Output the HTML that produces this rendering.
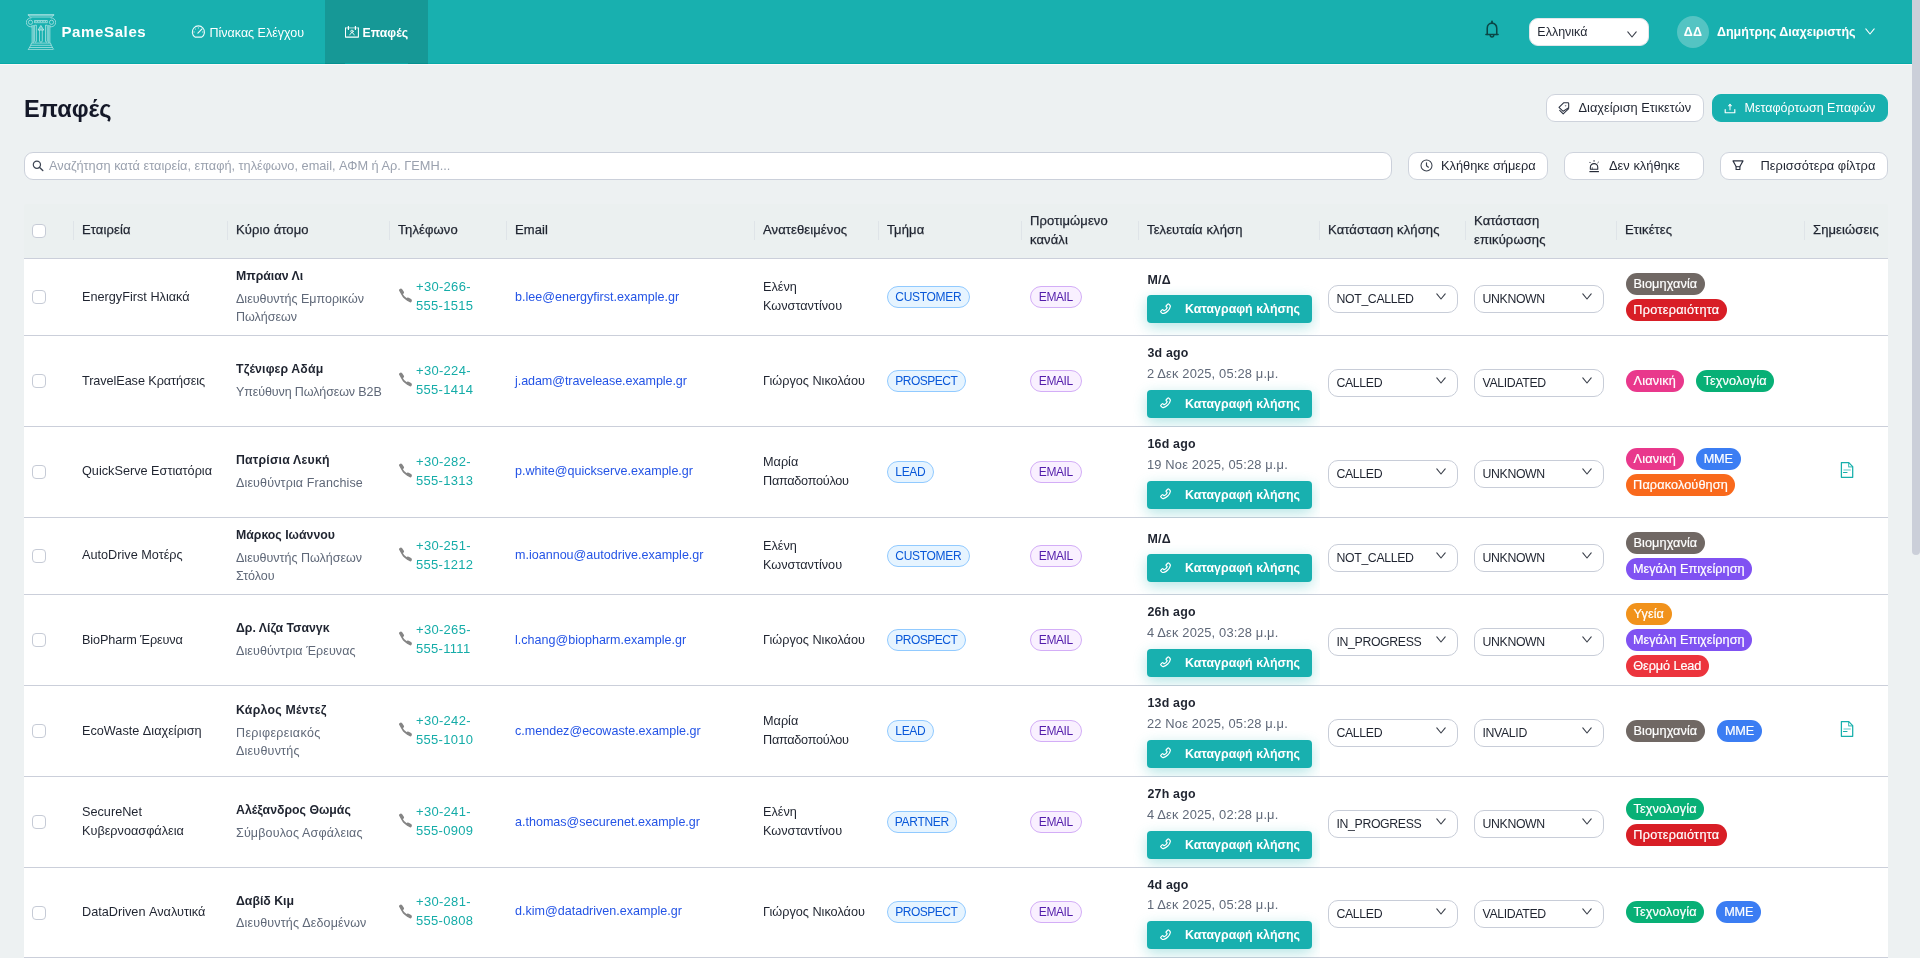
<!DOCTYPE html>
<html lang="el"><head><meta charset="utf-8"><title>PameSales</title>
<style>
*{box-sizing:border-box;margin:0;padding:0}
html,body{width:1920px;height:958px;overflow:hidden}
body{font-family:"Liberation Sans",sans-serif;background:#edf1f2;color:#1f2430;font-size:13px;position:relative}
svg{display:block}
#root{position:absolute;left:0;top:0;width:1920px;height:958px;will-change:transform}
.nav{position:absolute;left:0;top:0;width:1920px;height:64px;background:#18b0af;z-index:2}
.nav .abs{position:absolute}
.brand{position:absolute;left:61.500px;top:20.800px;font-size:15px;letter-spacing:.62px;font-weight:700;color:#fff;line-height:22px;white-space:nowrap}
.tab-active{position:absolute;left:325px;top:0;width:103px;height:64px;background:#169896;border-bottom:1px solid #049090}
.navb{position:absolute;left:0;top:63px;width:1920px;height:1px;background:#07aaa8}
.navw{position:absolute;left:0;top:64px;width:1912px;height:1px;background:#fcf8f8}
.tab-line{position:absolute;left:345px;top:63px;width:63px;height:1px;background:#08a8a6}
.navtxt{position:absolute;top:23px;line-height:20px;color:#fff;white-space:nowrap}
.lang{position:absolute;left:1529px;top:18px;width:120px;height:28px;background:#fff;border-radius:9px;border:1px solid #e3e6ea}
.lang span{position:absolute;left:7.300px;top:3px;line-height:20px;font-size:12.5px;color:#1f2430}
.avatar{position:absolute;left:1677px;top:16px;width:32px;height:32px;border-radius:50%;background:#54c4c3;color:#fff;font-weight:700;font-size:12.5px;line-height:33px;text-align:center;letter-spacing:.3px}
.scroll{position:absolute;left:1912px;top:0;width:8px;height:555px;background:#cbcfd9;border-radius:0 0 4px 4px;z-index:3}
h1{position:absolute;left:24px;top:93px;font-size:23.6px;line-height:32px;font-weight:700;color:#141828;letter-spacing:0;white-space:nowrap}
.btn{position:absolute;height:28px;border-radius:9px;background:#fff;border:1px solid #ced3dc;font-size:13px;line-height:26px;color:#1f2430;white-space:nowrap}
.btn.primary{background:#18b0af;border-color:#18b0af;color:#fff}
.btn .t{position:absolute;top:0}
.btn svg{position:absolute}
.search{position:absolute;left:24px;top:152px;width:1368px;height:28px;border-radius:9px;background:#fff;border:1px solid #cbd0da}
.search span{position:absolute;left:24px;top:0;line-height:26px;font-size:12.75px;color:#9aa1ae;white-space:nowrap}
table{position:absolute;left:24px;top:204px;width:1864px;border-collapse:separate;border-spacing:0;table-layout:fixed}
th{background:#ebf0f0;height:55px;border-bottom:1px solid #cbcfda;text-align:left;font-weight:400;font-size:13px;line-height:19.5px;padding:0 8px 2px;position:relative;color:#1f2430;vertical-align:middle;-webkit-text-stroke:.25px #1f2430;letter-spacing:.12px}
th:first-child{border-top-left-radius:2px}
th:last-child{border-top-right-radius:2px}
th:not(:last-child)::after{content:"";position:absolute;right:0;top:17px;width:1px;height:19px;background:#dfe4e8}
td{background:#fff;border-bottom:1px solid #cbcfda;padding:0 8px;vertical-align:middle;font-size:13px;line-height:19.5px;white-space:nowrap;position:relative}
tr.s td{height:77px}
tr.t td{height:91px}
tr.u td{height:90px}
tr.u .sel{top:1px}
tr.u .tags,tr.u .tag{position:relative;top:-1px}
.cb{display:block;width:14px;height:14px;border:1px solid #c6cbd6;border-radius:4px;background:#fff}
.co{font-size:12.7px;color:#1f2430;position:relative}
.co.one{top:1px}
.co.one.up{top:0}
.nm{font-weight:700;font-size:12.3px;color:#1f2430;line-height:19.5px;position:relative;top:-1px}
.ti{font-size:12.5px;color:#5f6878;line-height:18px;margin-top:3px}
.nm.r8{top:-1px}
.ti.r8{margin-top:1px}
.ph{color:#15aca8;font-size:13px;letter-spacing:.3px;line-height:19px;padding-left:18px;position:relative;top:-1.500px}
.ph svg{position:absolute;left:-.5px;top:11.500px}
.em{color:#2454e6;font-size:12.55px;position:relative;top:0}
.em.up{top:-1px}
.as{font-size:12.7px;line-height:19.5px}
.as.one{position:relative;top:1px}
.as.one.up{top:0}
.tag{display:inline-block;height:22px;line-height:20px;border-radius:11px;border:1px solid;padding:0;text-align:center;font-size:12px;letter-spacing:-.3px;text-indent:-.3px}
.tag.b{background:#e6f4ff;border-color:#91caff;color:#0958d9}
.tag.p{background:#f9f0ff;border-color:#d3adf7;color:#531dab}
.lc{display:flex;flex-direction:column}
.lc b{font-size:12.4px;line-height:19.5px;font-weight:700;letter-spacing:.2px;padding-left:.5px}
.lc i{font-style:normal;font-size:12.9px;color:#5f6878;line-height:18px;margin-top:1px;letter-spacing:.15px}
.cbtn{display:block;height:28px;margin-top:7px;border-radius:4px;background:#18b0af;color:#fff;font-weight:700;font-size:12.4px;line-height:28px;position:relative;box-shadow:0 4px 14px rgba(24,176,175,.33)}
tr.s .cbtn{margin-top:5px}
.cbtn svg{position:absolute;left:12.500px;top:7.500px}
.cbtn span{position:absolute;left:38px;top:0}
.sel{display:block;position:relative;top:2px;width:130px;height:28px;border:1px solid #c8cdd8;border-radius:10px;background:#fff;font-size:12.3px;letter-spacing:-.36px;line-height:26.400px;padding-left:7.500px;color:#1f2430}
.sel svg{position:absolute;right:11.500px;top:7px}
.tags{display:flex;flex-wrap:wrap;gap:4px 12px;align-items:flex-start}
.tags.col{flex-direction:column;gap:4px}
.tl{display:flex;gap:12px;height:22px}
.pill{display:inline-block;height:22px;line-height:22px;border-radius:11px;padding:0;text-align:center;font-size:12.7px;color:#fff;flex:none;-webkit-text-stroke:.2px #fff}
.tags{margin-left:.8px}
.note{position:absolute;left:35px;top:50%;margin-top:-10px}
</style></head>
<body><div id="root">
<div class="nav">
<div class="navb"></div><div class="tab-active"></div><div class="tab-line"></div><div class="navw"></div>
<svg style="position:absolute;left:26px;top:14px" width="30" height="36" viewBox="0 0 30 36" >
<g fill="none" stroke="#fff" stroke-opacity=".82" stroke-width=".62" stroke-linejoin="round" stroke-linecap="butt">
<path d="M2.200 .4h25.600v.9H2.200z"/>
<path d="M2.600 1.300c.5 1.100 1.500 1.700 2.900 1.700h19c1.400 0 2.400-.6 2.900-1.700"/>
<path d="M5.500 3.800C2.600 3.800.3 5.800.3 8.300s2 4.500 4.600 4.500h1.200"/>
<path d="M24.500 3.800c2.900 0 5.200 2 5.200 4.500s-2 4.500-4.600 4.500h-1.200"/>
<circle cx="4.500" cy="8.300" r="2.100"/>
<circle cx="25.500" cy="8.300" r="2.100"/>
<path d="M8.500 6.500h12.800v2.200H8.500z"/>
<path d="M9.500 7.500h10.800" stroke-dasharray=".8 .8" stroke-width=".8"/>
<path d="M6.100 11v17.800M7.300 11v17.800M22.700 11v17.800M23.900 11v17.800"/>
<path d="M8.600 11.200h1.800v15.900c0 .6-.4 1-.9 1s-.9-.4-.9-1z"/>
<path d="M19.500 11.200h1.800v15.900c0 .6-.4 1-.9 1s-.9-.4-.9-1z"/>
<path d="M13.500 16.100v11c0 .6.600 1 1.400 1s1.400-.4 1.400-1v-11"/>
<path d="M12 16.100l2.900-4.700 2.900 4.700z" fill="#fff" fill-opacity=".35"/>
<path d="M5.500 29.100h19M4.700 31.300h20.600M3.500 33.500h23M2.200 35.600h24.800"/>
<path d="M5.500 29.100l-.8 2.200-1.200 2.200-1.300 2.100M24.500 29.100l.8 2.200 1.200 2.200 1.300 2.100"/>
</g></svg>
<div class="brand">PameSales</div>
<svg style="position:absolute;left:191.3px;top:25.2px" width="15" height="14" viewBox="0 0 15 14" >
<g fill="none" stroke="#fff" stroke-opacity=".92" stroke-width="1.100" stroke-linecap="round" stroke-linejoin="round">
<path d="M4.050 12.100A6.100 6.100 0 1 1 10.750 12.100z"/>
<path d="M6.900 8.100l4.200-4.300" stroke-width="1.200"/>
<path d="M7.400 2.700v.5M2.700 7h.7M11.400 7h.7M4.100 3.700l.5.500" stroke-width=".9" stroke-opacity=".8"/>
</g></svg><svg style="position:absolute;left:345px;top:26px" width="15" height="13" viewBox="0 0 15 13" >
<g fill="none" stroke="#fff" stroke-width="1.050" stroke-linejoin="round" stroke-linecap="round">
<path d="M.5 1.900V11.100H13.400V1.900" />
<path d="M.5 1.900H13.400" stroke-opacity=".75" stroke-width=".9"/>
<path d="M3.400 .5v3M10.400 .5v3" stroke-width="1.200"/>
<circle cx="7" cy="5.300" r="1.200" stroke-width=".85"/>
<path d="M4.850 8.900c.3-1.400 1.200-2.100 2.150-2.100s1.850.7 2.150 2.100" stroke-width=".85"/>
</g></svg>
<div class="navtxt" style="left:209.500px;font-size:12.5px">Πίνακας Ελέγχου</div>
<div class="navtxt" style="left:362.500px;font-size:12.3px;font-weight:700">Επαφές</div>
<svg style="position:absolute;left:1485px;top:19.6px" width="14" height="18.6" viewBox="0 0 15 19" >
<g fill="none" stroke="#0b4646" stroke-width="1.650" stroke-linecap="round" stroke-linejoin="round">
<path d="M7.500 1.100v1.700" stroke-width="1.900"/>
<path d="M2.400 15V8.300c0-3 2.200-5.400 5.100-5.400s5.100 2.400 5.100 5.400V15"/>
<path d="M1 15.100h13"/>
<path d="M5.600 15.600c0 1.300.8 2.200 1.900 2.200s1.900-.9 1.900-2.200" stroke-width="1.500"/>
</g></svg>
<div class="lang"><span>Ελληνικά</span><div style="position:absolute;left:97px;top:11.500px"><svg class="chev" width="10" height="7" viewBox="0 0 10 7" fill="none" stroke="#3a3f4a" stroke-width="1.1" stroke-linecap="round" stroke-linejoin="round"><path d="M0.8 0.9 L5 6 L9.2 0.9"/></svg></div></div>
<div class="avatar">ΔΔ</div>
<div class="navtxt" style="left:1717px;top:22px;font-size:12.5px;font-weight:700">Δημήτρης Διαχειριστής</div>
<div style="position:absolute;left:1865px;top:28px"><svg class="chev" width="10" height="7" viewBox="0 0 10 7" fill="none" stroke="#fff" stroke-width="1.05" stroke-linecap="round" stroke-linejoin="round"><path d="M0.8 0.9 L5 6 L9.2 0.9"/></svg></div>
</div>
<h1>Επαφές</h1>
<div class="btn" style="left:1546px;top:94px;width:158px"><svg style="position:absolute;left:10.8px;top:7px" width="12" height="13" viewBox="0 0 12 13" >
<g fill="none" stroke="#2a3140" stroke-width="1.050" stroke-linejoin="round" stroke-linecap="round">
<path d="M5.600 .8h4.300c.5 0 .8.300.8.800v4L5.200 9.300 1 5.400z"/>
<circle cx="7.600" cy="3.700" r=".3" fill="#2a3140" stroke-opacity=".6"/>
<path d="M1.700 8.400l3.500 3.500 5.500-5.300"/>
</g></svg><span class="t" style="left:31.500px;font-size:12.8px">Διαχείριση Ετικετών</span></div>
<div class="btn primary" style="left:1712px;top:94px;width:176px"><svg style="position:absolute;left:10.8px;top:8px" width="12" height="11" viewBox="0 0 12 11" >
<g fill="none" stroke="#fff" stroke-width="1.150" stroke-linecap="round" stroke-linejoin="round">
<path d="M1.200 6.500v3.200h9.600V6.500"/>
<path d="M6 1.600v5.100" stroke-opacity=".75" stroke-width="1.300"/>
<path d="M4.500 2.600L6 .9l1.500 1.700z" fill="#fff" stroke-width=".6"/>
</g></svg><span class="t" style="left:31.500px;font-size:12.5px">Μεταφόρτωση Επαφών</span></div>
<div class="search"><svg style="position:absolute;left:7px;top:7px" width="12" height="12" viewBox="0 0 12 12" >
<g fill="none" stroke="#3d4553" stroke-width="1.200" stroke-linecap="round">
<circle cx="4.900" cy="4.700" r="3.600"/>
<path d="M7.600 7.400l3.200 3.200" stroke-width="1.400"/>
</g></svg><span>Αναζήτηση κατά εταιρεία, επαφή, τηλέφωνο, email, ΑΦΜ ή Αρ. ΓΕΜΗ...</span></div>
<div class="btn" style="left:1408px;top:152px;width:140px"><svg style="position:absolute;left:11px;top:6.1px" width="13" height="13" viewBox="0 0 13 13" >
<g fill="none" stroke="#3a414e" stroke-width="1.050" stroke-linecap="round" stroke-linejoin="round">
<circle cx="6.500" cy="6.500" r="5.500"/>
<path d="M6.500 3.700v3l1.900 1.500" stroke-width="1.150"/>
</g></svg><span class="t" style="left:32px;font-size:12.8px">Κλήθηκε σήμερα</span></div>
<div class="btn" style="left:1564px;top:152px;width:140px"><svg style="position:absolute;left:24px;top:7px" width="11" height="13" viewBox="0 0 11 13" >
<g fill="none" stroke="#252b38" stroke-width="1.100" stroke-linecap="round" stroke-linejoin="round">
<path d="M1.350 9.300V7.350a3.700 3.700 0 0 1 7.400 0V9.300z"/>
<path d="M.4 11.600h9.500" stroke-width="1.200" stroke-linecap="butt"/>
<path d="M5.050 .5v.8M.7 2.200l.6.600M9.400 2.200l-.6.600" stroke-width="1"/>
<path d="M3.300 7.600v1.600" stroke-width=".8" stroke-opacity=".8"/>
</g></svg><span class="t" style="left:44px;font-size:12.9px">Δεν κλήθηκε</span></div>
<div class="btn" style="left:1720px;top:152px;width:168px"><svg style="position:absolute;left:10.8px;top:6.6px" width="12" height="11" viewBox="0 0 12 11" >
<g fill="none" stroke="#2a3140" stroke-width="1.150" stroke-linejoin="round" stroke-linecap="round">
<path d="M1 .9h10L7.900 6.500v3H4.100V6.500z"/>
<path d="M4.100 6.700h3.800" stroke-width="1"/>
</g></svg><span class="t" style="left:39.500px;font-size:12.9px">Περισσότερα φίλτρα</span></div>

<table><colgroup><col style="width:50px"><col style="width:154px"><col style="width:162px"><col style="width:117px"><col style="width:248px"><col style="width:124px"><col style="width:143px"><col style="width:117px"><col style="width:181px"><col style="width:146px"><col style="width:151px"><col style="width:188px"><col style="width:83px"></colgroup><thead><tr><th><span class="cb" style="position:relative;top:1px"></span></th><th>Εταιρεία</th><th>Κύριο άτομο</th><th>Τηλέφωνο</th><th>Email</th><th>Ανατεθειμένος</th><th>Τμήμα</th><th>Προτιμώμενο<br>κανάλι</th><th>Τελευταία κλήση</th><th>Κατάσταση κλήσης</th><th>Κατάσταση<br>επικύρωσης</th><th>Ετικέτες</th><th>Σημειώσεις</th></tr></thead><tbody><tr class="s">
<td><span class="cb"></span></td>
<td><div class="co one">EnergyFirst Ηλιακά</div></td>
<td><div class="nm">Μπράιαν Λι</div><div class="ti">Διευθυντής Εμπορικών<br>Πωλήσεων</div></td>
<td><div class="ph"><svg width="15" height="15" viewBox="0 0 15 15"><g fill="none" stroke="#858585" stroke-linecap="round"><path d="M3.100 3.200C3.600 7.200 6.900 11 11.300 12.100" stroke-width="1.900"/><path d="M2.800 2.300l1.500 2.100" stroke-width="3.400"/><path d="M9.900 11.300l2.300 1.300" stroke-width="3.400"/></g></svg>+30-266-<br>555-1515</div></td>
<td><span class="em">b.lee@energyfirst.example.gr</span></td>
<td><div class="as">Ελένη<br>Κωνσταντίνου</div></td>
<td><span class="tag b" style="width:83px;letter-spacing:-0.3px;text-indent:-0.3px">CUSTOMER</span></td>
<td><span class="tag p" style="width:52px;letter-spacing:-.4px;text-indent:-.4px">EMAIL</span></td>
<td><div class="lc"><b>Μ/Δ</b><div class="cbtn"><svg width="11.5" height="11.5" viewBox="0 0 24 24" fill="none" stroke="#fff" stroke-width="2.500" stroke-linejoin="round" stroke-linecap="round"><path d="M15.500 3.200 13 5.700c-.6.600-.6 1.500 0 2.100l2 2c-1.200 3-3.500 5.300-6.500 6.500l-2-2c-.6-.6-1.500-.6-2.100 0l-2.500 2.500c-.6.600-.6 1.500 0 2.100l2.300 2.300c.7.700 1.700 1 2.700.8 6.500-1.200 13.400-8.100 14.600-14.600.2-1-.1-2-.8-2.700l-2.300-2.300c-.6-.6-1.500-.6-2.100 0z"/></svg><span>Καταγραφή κλήσης</span></div></div></td>
<td><div class="sel">NOT_CALLED<svg class="chev" width="10" height="7" viewBox="0 0 10 7" fill="none" stroke="#3a3f4a" stroke-width="1.1" stroke-linecap="round" stroke-linejoin="round"><path d="M0.8 0.9 L5 6 L9.2 0.9"/></svg></div></td>
<td><div class="sel">UNKNOWN<svg class="chev" width="10" height="7" viewBox="0 0 10 7" fill="none" stroke="#3a3f4a" stroke-width="1.1" stroke-linecap="round" stroke-linejoin="round"><path d="M0.8 0.9 L5 6 L9.2 0.9"/></svg></div></td>
<td><div class="tags col"><span class="pill" style="background:#706864;width:79.2px;letter-spacing:0.1px">Βιομηχανία</span><span class="pill" style="background:#d81e26;width:101.2px;letter-spacing:0.29px">Προτεραιότητα</span></div></td>
<td></td>
</tr>
<tr class="t">
<td><span class="cb"></span></td>
<td><div class="co one"><span style="letter-spacing:-0.085px">TravelEase Κρατήσεις</span></div></td>
<td><div class="nm"><span style="letter-spacing:0.13px">Τζένιφερ Αδάμ</span></div><div class="ti"><span style="letter-spacing:-0.11px">Υπεύθυνη Πωλήσεων B2B</span></div></td>
<td><div class="ph"><svg width="15" height="15" viewBox="0 0 15 15"><g fill="none" stroke="#858585" stroke-linecap="round"><path d="M3.100 3.200C3.600 7.200 6.900 11 11.300 12.100" stroke-width="1.900"/><path d="M2.800 2.300l1.500 2.100" stroke-width="3.400"/><path d="M9.900 11.300l2.300 1.300" stroke-width="3.400"/></g></svg>+30-224-<br>555-1414</div></td>
<td><span class="em"><span style="letter-spacing:-0.07px">j.adam@travelease.example.gr</span></span></td>
<td><div class="as one">Γιώργος Νικολάου</div></td>
<td><span class="tag b" style="width:79px;letter-spacing:-0.5px;text-indent:-0.5px">PROSPECT</span></td>
<td><span class="tag p" style="width:52px;letter-spacing:-.4px;text-indent:-.4px">EMAIL</span></td>
<td><div class="lc"><b>3d ago</b><i>2 Δεκ 2025, 05:28 μ.μ.</i><div class="cbtn"><svg width="11.5" height="11.5" viewBox="0 0 24 24" fill="none" stroke="#fff" stroke-width="2.500" stroke-linejoin="round" stroke-linecap="round"><path d="M15.500 3.200 13 5.700c-.6.600-.6 1.500 0 2.100l2 2c-1.200 3-3.500 5.300-6.500 6.500l-2-2c-.6-.6-1.500-.6-2.100 0l-2.500 2.500c-.6.600-.6 1.500 0 2.100l2.300 2.300c.7.700 1.700 1 2.700.8 6.500-1.200 13.400-8.100 14.600-14.600.2-1-.1-2-.8-2.700l-2.300-2.300c-.6-.6-1.500-.6-2.100 0z"/></svg><span>Καταγραφή κλήσης</span></div></div></td>
<td><div class="sel">CALLED<svg class="chev" width="10" height="7" viewBox="0 0 10 7" fill="none" stroke="#3a3f4a" stroke-width="1.1" stroke-linecap="round" stroke-linejoin="round"><path d="M0.8 0.9 L5 6 L9.2 0.9"/></svg></div></td>
<td><div class="sel">VALIDATED<svg class="chev" width="10" height="7" viewBox="0 0 10 7" fill="none" stroke="#3a3f4a" stroke-width="1.1" stroke-linecap="round" stroke-linejoin="round"><path d="M0.8 0.9 L5 6 L9.2 0.9"/></svg></div></td>
<td><div class="tags col"><div class="tl"><span class="pill" style="background:#e9388c;width:58px;letter-spacing:0.2px">Λιανική</span><span class="pill" style="background:#08b076;width:78.5px;letter-spacing:0.18px">Τεχνολογία</span></div></div></td>
<td></td>
</tr>
<tr class="t">
<td><span class="cb"></span></td>
<td><div class="co one up">QuickServe Εστιατόρια</div></td>
<td><div class="nm"><span style="letter-spacing:0.2px">Πατρίσια Λευκή</span></div><div class="ti"><span style="letter-spacing:0.14px">Διευθύντρια Franchise</span></div></td>
<td><div class="ph"><svg width="15" height="15" viewBox="0 0 15 15"><g fill="none" stroke="#858585" stroke-linecap="round"><path d="M3.100 3.200C3.600 7.200 6.900 11 11.300 12.100" stroke-width="1.900"/><path d="M2.800 2.300l1.500 2.100" stroke-width="3.400"/><path d="M9.900 11.300l2.300 1.300" stroke-width="3.400"/></g></svg>+30-282-<br>555-1313</div></td>
<td><span class="em up">p.white@quickserve.example.gr</span></td>
<td><div class="as">Μαρία<br><span style="letter-spacing:-.28px">Παπαδοπούλου</span></div></td>
<td><span class="tag b" style="width:47px;letter-spacing:-0.3px;text-indent:-0.3px">LEAD</span></td>
<td><span class="tag p" style="width:52px;letter-spacing:-.4px;text-indent:-.4px">EMAIL</span></td>
<td><div class="lc"><b>16d ago</b><i>19 Νοε 2025, 05:28 μ.μ.</i><div class="cbtn"><svg width="11.5" height="11.5" viewBox="0 0 24 24" fill="none" stroke="#fff" stroke-width="2.500" stroke-linejoin="round" stroke-linecap="round"><path d="M15.500 3.200 13 5.700c-.6.600-.6 1.500 0 2.100l2 2c-1.200 3-3.500 5.300-6.500 6.500l-2-2c-.6-.6-1.500-.6-2.100 0l-2.500 2.500c-.6.600-.6 1.500 0 2.100l2.300 2.300c.7.700 1.700 1 2.700.8 6.500-1.200 13.400-8.100 14.600-14.600.2-1-.1-2-.8-2.700l-2.300-2.300c-.6-.6-1.500-.6-2.100 0z"/></svg><span>Καταγραφή κλήσης</span></div></div></td>
<td><div class="sel">CALLED<svg class="chev" width="10" height="7" viewBox="0 0 10 7" fill="none" stroke="#3a3f4a" stroke-width="1.1" stroke-linecap="round" stroke-linejoin="round"><path d="M0.8 0.9 L5 6 L9.2 0.9"/></svg></div></td>
<td><div class="sel">UNKNOWN<svg class="chev" width="10" height="7" viewBox="0 0 10 7" fill="none" stroke="#3a3f4a" stroke-width="1.1" stroke-linecap="round" stroke-linejoin="round"><path d="M0.8 0.9 L5 6 L9.2 0.9"/></svg></div></td>
<td><div class="tags col"><div class="tl"><span class="pill" style="background:#e9388c;width:58px;letter-spacing:0.2px">Λιανική</span><span class="pill" style="background:#3b7df3;width:44.9px;letter-spacing:-0.2px">MME</span></div><div class="tl"><span class="pill" style="background:#f9691c;width:109.4px;letter-spacing:0.12px">Παρακολούθηση</span></div></div></td>
<td><span class="note"><svg width="14" height="16" viewBox="0 0 14 16" fill="none" stroke="#16afab" stroke-width="1.250" stroke-linejoin="round"><path d="M1.400 .6h7.400l3.900 4V15.250H1.400z"/><path d="M8.600 1v3.800h3.800" stroke-width="1.150" stroke-opacity=".75"/><path d="M3.500 8h7.200" stroke-width="1.400" stroke-opacity=".5"/><path d="M3.400 10.450h3.600" stroke-width="1.100" stroke-linecap="round"/></svg></span></td>
</tr>
<tr class="s">
<td><span class="cb"></span></td>
<td><div class="co one up">AutoDrive Μοτέρς</div></td>
<td><div class="nm">Μάρκος Ιωάννου</div><div class="ti">Διευθυντής Πωλήσεων<br>Στόλου</div></td>
<td><div class="ph"><svg width="15" height="15" viewBox="0 0 15 15"><g fill="none" stroke="#858585" stroke-linecap="round"><path d="M3.100 3.200C3.600 7.200 6.900 11 11.300 12.100" stroke-width="1.900"/><path d="M2.800 2.300l1.500 2.100" stroke-width="3.400"/><path d="M9.900 11.300l2.300 1.300" stroke-width="3.400"/></g></svg>+30-251-<br>555-1212</div></td>
<td><span class="em up">m.ioannou@autodrive.example.gr</span></td>
<td><div class="as">Ελένη<br>Κωνσταντίνου</div></td>
<td><span class="tag b" style="width:83px;letter-spacing:-0.3px;text-indent:-0.3px">CUSTOMER</span></td>
<td><span class="tag p" style="width:52px;letter-spacing:-.4px;text-indent:-.4px">EMAIL</span></td>
<td><div class="lc"><b>Μ/Δ</b><div class="cbtn"><svg width="11.5" height="11.5" viewBox="0 0 24 24" fill="none" stroke="#fff" stroke-width="2.500" stroke-linejoin="round" stroke-linecap="round"><path d="M15.500 3.200 13 5.700c-.6.600-.6 1.500 0 2.100l2 2c-1.200 3-3.500 5.300-6.500 6.500l-2-2c-.6-.6-1.500-.6-2.100 0l-2.500 2.500c-.6.600-.6 1.500 0 2.100l2.300 2.300c.7.700 1.700 1 2.700.8 6.500-1.200 13.400-8.100 14.600-14.600.2-1-.1-2-.8-2.700l-2.300-2.300c-.6-.6-1.500-.6-2.100 0z"/></svg><span>Καταγραφή κλήσης</span></div></div></td>
<td><div class="sel">NOT_CALLED<svg class="chev" width="10" height="7" viewBox="0 0 10 7" fill="none" stroke="#3a3f4a" stroke-width="1.1" stroke-linecap="round" stroke-linejoin="round"><path d="M0.8 0.9 L5 6 L9.2 0.9"/></svg></div></td>
<td><div class="sel">UNKNOWN<svg class="chev" width="10" height="7" viewBox="0 0 10 7" fill="none" stroke="#3a3f4a" stroke-width="1.1" stroke-linecap="round" stroke-linejoin="round"><path d="M0.8 0.9 L5 6 L9.2 0.9"/></svg></div></td>
<td><div class="tags col"><span class="pill" style="background:#706864;width:79.2px;letter-spacing:0.1px">Βιομηχανία</span><span class="pill" style="background:#8052f2;width:126px;letter-spacing:0.03px">Μεγάλη Επιχείρηση</span></div></td>
<td></td>
</tr>
<tr class="t">
<td><span class="cb"></span></td>
<td><div class="co one"><span style="letter-spacing:-0.13px">BioPharm Έρευνα</span></div></td>
<td><div class="nm">Δρ. Λίζα Τσανγκ</div><div class="ti"><span style="letter-spacing:0.09px">Διευθύντρια Έρευνας</span></div></td>
<td><div class="ph"><svg width="15" height="15" viewBox="0 0 15 15"><g fill="none" stroke="#858585" stroke-linecap="round"><path d="M3.100 3.200C3.600 7.200 6.900 11 11.300 12.100" stroke-width="1.900"/><path d="M2.800 2.300l1.500 2.100" stroke-width="3.400"/><path d="M9.900 11.300l2.300 1.300" stroke-width="3.400"/></g></svg>+30-265-<br>555-1111</div></td>
<td><span class="em">l.chang@biopharm.example.gr</span></td>
<td><div class="as one">Γιώργος Νικολάου</div></td>
<td><span class="tag b" style="width:79px;letter-spacing:-0.5px;text-indent:-0.5px">PROSPECT</span></td>
<td><span class="tag p" style="width:52px;letter-spacing:-.4px;text-indent:-.4px">EMAIL</span></td>
<td><div class="lc"><b>26h ago</b><i>4 Δεκ 2025, 03:28 μ.μ.</i><div class="cbtn"><svg width="11.5" height="11.5" viewBox="0 0 24 24" fill="none" stroke="#fff" stroke-width="2.500" stroke-linejoin="round" stroke-linecap="round"><path d="M15.500 3.200 13 5.700c-.6.600-.6 1.500 0 2.100l2 2c-1.200 3-3.500 5.300-6.500 6.500l-2-2c-.6-.6-1.500-.6-2.100 0l-2.500 2.500c-.6.600-.6 1.500 0 2.100l2.300 2.300c.7.700 1.700 1 2.700.8 6.500-1.200 13.400-8.100 14.600-14.600.2-1-.1-2-.8-2.700l-2.300-2.300c-.6-.6-1.500-.6-2.100 0z"/></svg><span>Καταγραφή κλήσης</span></div></div></td>
<td><div class="sel">IN_PROGRESS<svg class="chev" width="10" height="7" viewBox="0 0 10 7" fill="none" stroke="#3a3f4a" stroke-width="1.1" stroke-linecap="round" stroke-linejoin="round"><path d="M0.8 0.9 L5 6 L9.2 0.9"/></svg></div></td>
<td><div class="sel">UNKNOWN<svg class="chev" width="10" height="7" viewBox="0 0 10 7" fill="none" stroke="#3a3f4a" stroke-width="1.1" stroke-linecap="round" stroke-linejoin="round"><path d="M0.8 0.9 L5 6 L9.2 0.9"/></svg></div></td>
<td><div class="tags col"><span class="pill" style="background:#f1921b;width:46px;letter-spacing:0.08px">Υγεία</span><span class="pill" style="background:#8052f2;width:126px;letter-spacing:0.03px">Μεγάλη Επιχείρηση</span><span class="pill" style="background:#ec343d;width:83px;letter-spacing:-0.08px">Θερμό Lead</span></div></td>
<td></td>
</tr>
<tr class="t">
<td><span class="cb"></span></td>
<td><div class="co one">EcoWaste Διαχείριση</div></td>
<td><div class="nm"><span style="letter-spacing:0.25px">Κάρλος Μέντεζ</span></div><div class="ti"><span style="letter-spacing:0.36px">Περιφερειακός</span><br><span style="letter-spacing:0.22px">Διευθυντής</span></div></td>
<td><div class="ph"><svg width="15" height="15" viewBox="0 0 15 15"><g fill="none" stroke="#858585" stroke-linecap="round"><path d="M3.100 3.200C3.600 7.200 6.900 11 11.300 12.100" stroke-width="1.900"/><path d="M2.800 2.300l1.500 2.100" stroke-width="3.400"/><path d="M9.900 11.300l2.300 1.300" stroke-width="3.400"/></g></svg>+30-242-<br>555-1010</div></td>
<td><span class="em">c.mendez@ecowaste.example.gr</span></td>
<td><div class="as">Μαρία<br><span style="letter-spacing:-.28px">Παπαδοπούλου</span></div></td>
<td><span class="tag b" style="width:47px;letter-spacing:-0.3px;text-indent:-0.3px">LEAD</span></td>
<td><span class="tag p" style="width:52px;letter-spacing:-.4px;text-indent:-.4px">EMAIL</span></td>
<td><div class="lc"><b>13d ago</b><i>22 Νοε 2025, 05:28 μ.μ.</i><div class="cbtn"><svg width="11.5" height="11.5" viewBox="0 0 24 24" fill="none" stroke="#fff" stroke-width="2.500" stroke-linejoin="round" stroke-linecap="round"><path d="M15.500 3.200 13 5.700c-.6.600-.6 1.500 0 2.100l2 2c-1.200 3-3.500 5.300-6.500 6.500l-2-2c-.6-.6-1.500-.6-2.100 0l-2.500 2.500c-.6.600-.6 1.500 0 2.100l2.300 2.300c.7.700 1.700 1 2.700.8 6.500-1.200 13.400-8.100 14.600-14.600.2-1-.1-2-.8-2.700l-2.300-2.300c-.6-.6-1.500-.6-2.100 0z"/></svg><span>Καταγραφή κλήσης</span></div></div></td>
<td><div class="sel">CALLED<svg class="chev" width="10" height="7" viewBox="0 0 10 7" fill="none" stroke="#3a3f4a" stroke-width="1.1" stroke-linecap="round" stroke-linejoin="round"><path d="M0.8 0.9 L5 6 L9.2 0.9"/></svg></div></td>
<td><div class="sel">INVALID<svg class="chev" width="10" height="7" viewBox="0 0 10 7" fill="none" stroke="#3a3f4a" stroke-width="1.1" stroke-linecap="round" stroke-linejoin="round"><path d="M0.8 0.9 L5 6 L9.2 0.9"/></svg></div></td>
<td><div class="tags col"><div class="tl"><span class="pill" style="background:#706864;width:79.2px;letter-spacing:0.1px">Βιομηχανία</span><span class="pill" style="background:#3b7df3;width:44.9px;letter-spacing:-0.2px">MME</span></div></div></td>
<td><span class="note"><svg width="14" height="16" viewBox="0 0 14 16" fill="none" stroke="#16afab" stroke-width="1.250" stroke-linejoin="round"><path d="M1.400 .6h7.400l3.900 4V15.250H1.400z"/><path d="M8.600 1v3.800h3.800" stroke-width="1.150" stroke-opacity=".75"/><path d="M3.500 8h7.200" stroke-width="1.400" stroke-opacity=".5"/><path d="M3.400 10.450h3.600" stroke-width="1.100" stroke-linecap="round"/></svg></span></td>
</tr>
<tr class="t">
<td><span class="cb"></span></td>
<td><div class="co">SecureNet<br>Κυβερνοασφάλεια</div></td>
<td><div class="nm">Αλέξανδρος Θωμάς</div><div class="ti"><span style="letter-spacing:0.15px">Σύμβουλος Ασφάλειας</span></div></td>
<td><div class="ph"><svg width="15" height="15" viewBox="0 0 15 15"><g fill="none" stroke="#858585" stroke-linecap="round"><path d="M3.100 3.200C3.600 7.200 6.900 11 11.300 12.100" stroke-width="1.900"/><path d="M2.800 2.300l1.500 2.100" stroke-width="3.400"/><path d="M9.900 11.300l2.300 1.300" stroke-width="3.400"/></g></svg>+30-241-<br>555-0909</div></td>
<td><span class="em">a.thomas@securenet.example.gr</span></td>
<td><div class="as">Ελένη<br>Κωνσταντίνου</div></td>
<td><span class="tag b" style="width:70px;letter-spacing:-0.3px;text-indent:-0.3px">PARTNER</span></td>
<td><span class="tag p" style="width:52px;letter-spacing:-.4px;text-indent:-.4px">EMAIL</span></td>
<td><div class="lc"><b>27h ago</b><i>4 Δεκ 2025, 02:28 μ.μ.</i><div class="cbtn"><svg width="11.5" height="11.5" viewBox="0 0 24 24" fill="none" stroke="#fff" stroke-width="2.500" stroke-linejoin="round" stroke-linecap="round"><path d="M15.500 3.200 13 5.700c-.6.600-.6 1.500 0 2.100l2 2c-1.200 3-3.500 5.300-6.500 6.500l-2-2c-.6-.6-1.500-.6-2.100 0l-2.500 2.500c-.6.600-.6 1.500 0 2.100l2.300 2.300c.7.700 1.700 1 2.700.8 6.500-1.200 13.400-8.100 14.600-14.600.2-1-.1-2-.8-2.700l-2.300-2.300c-.6-.6-1.500-.6-2.100 0z"/></svg><span>Καταγραφή κλήσης</span></div></div></td>
<td><div class="sel">IN_PROGRESS<svg class="chev" width="10" height="7" viewBox="0 0 10 7" fill="none" stroke="#3a3f4a" stroke-width="1.1" stroke-linecap="round" stroke-linejoin="round"><path d="M0.8 0.9 L5 6 L9.2 0.9"/></svg></div></td>
<td><div class="sel">UNKNOWN<svg class="chev" width="10" height="7" viewBox="0 0 10 7" fill="none" stroke="#3a3f4a" stroke-width="1.1" stroke-linecap="round" stroke-linejoin="round"><path d="M0.8 0.9 L5 6 L9.2 0.9"/></svg></div></td>
<td><div class="tags col"><span class="pill" style="background:#08b076;width:78.5px;letter-spacing:0.18px">Τεχνολογία</span><span class="pill" style="background:#d81e26;width:101.2px;letter-spacing:0.29px">Προτεραιότητα</span></div></td>
<td></td>
</tr>
<tr class="u">
<td><span class="cb"></span></td>
<td><div class="co one up">DataDriven Αναλυτικά</div></td>
<td><div class="nm r8">Δαβίδ Κιμ</div><div class="ti r8"><span style="letter-spacing:0.17px">Διευθυντής Δεδομένων</span></div></td>
<td><div class="ph"><svg width="15" height="15" viewBox="0 0 15 15"><g fill="none" stroke="#858585" stroke-linecap="round"><path d="M3.100 3.200C3.600 7.200 6.900 11 11.300 12.100" stroke-width="1.900"/><path d="M2.800 2.300l1.500 2.100" stroke-width="3.400"/><path d="M9.900 11.300l2.300 1.300" stroke-width="3.400"/></g></svg>+30-281-<br>555-0808</div></td>
<td><span class="em up">d.kim@datadriven.example.gr</span></td>
<td><div class="as one up">Γιώργος Νικολάου</div></td>
<td><span class="tag b" style="width:79px;letter-spacing:-0.5px;text-indent:-0.5px">PROSPECT</span></td>
<td><span class="tag p" style="width:52px;letter-spacing:-.4px;text-indent:-.4px">EMAIL</span></td>
<td><div class="lc"><b>4d ago</b><i>1 Δεκ 2025, 05:28 μ.μ.</i><div class="cbtn"><svg width="11.5" height="11.5" viewBox="0 0 24 24" fill="none" stroke="#fff" stroke-width="2.500" stroke-linejoin="round" stroke-linecap="round"><path d="M15.500 3.200 13 5.700c-.6.600-.6 1.500 0 2.100l2 2c-1.200 3-3.500 5.300-6.500 6.500l-2-2c-.6-.6-1.500-.6-2.100 0l-2.500 2.500c-.6.600-.6 1.500 0 2.100l2.300 2.300c.7.700 1.700 1 2.700.8 6.500-1.200 13.400-8.100 14.600-14.600.2-1-.1-2-.8-2.700l-2.300-2.300c-.6-.6-1.500-.6-2.100 0z"/></svg><span>Καταγραφή κλήσης</span></div></div></td>
<td><div class="sel">CALLED<svg class="chev" width="10" height="7" viewBox="0 0 10 7" fill="none" stroke="#3a3f4a" stroke-width="1.1" stroke-linecap="round" stroke-linejoin="round"><path d="M0.8 0.9 L5 6 L9.2 0.9"/></svg></div></td>
<td><div class="sel">VALIDATED<svg class="chev" width="10" height="7" viewBox="0 0 10 7" fill="none" stroke="#3a3f4a" stroke-width="1.1" stroke-linecap="round" stroke-linejoin="round"><path d="M0.8 0.9 L5 6 L9.2 0.9"/></svg></div></td>
<td><div class="tags col"><div class="tl"><span class="pill" style="background:#08b076;width:78.5px;letter-spacing:0.18px">Τεχνολογία</span><span class="pill" style="background:#3b7df3;width:44.9px;letter-spacing:-0.2px">MME</span></div></div></td>
<td></td>
</tr>
</tbody></table>
<div class="scroll"></div>
</div></body></html>
